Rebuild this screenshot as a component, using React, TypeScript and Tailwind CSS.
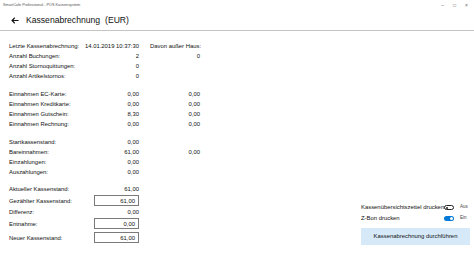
import React from "react";

type RowProps = { label: string; value?: string; extra?: string; extraLeft?: boolean };

function Row({ label, value, extra, extraLeft }: RowProps) {
  return (
    <div className="flex h-[10px] items-center whitespace-nowrap leading-[10px]">
      <span className="w-[85px] shrink-0">{label}</span>
      <span className="flex w-[45px] shrink-0 justify-end">{value}</span>
      <span className="w-[11px] shrink-0" />
      <span className={`flex w-[50px] shrink-0 ${extraLeft ? "justify-start" : "justify-end"}`}>{extra}</span>
    </div>
  );
}

function BoxRow({ label, value }: { label: string; value: string }) {
  return (
    <div className="flex h-[13px] items-center whitespace-nowrap leading-[10px]">
      <span className="w-[85px] shrink-0">{label}</span>
      <div className="flex h-[11px] w-[45px] shrink-0 items-center justify-end border border-[#7a7a7a] bg-white pr-[3px]">{value}</div>
    </div>
  );
}

function Toggle({ on, label, state }: { on: boolean; label: string; state: string }) {
  return (
    <div className="flex h-[11px] items-center whitespace-nowrap">
      <span className="flex-1">{label}</span>
      {on ? (
        <span className="flex h-[5px] w-[10px] items-center justify-end rounded-full bg-[#0078d7] pr-[1px]">
          <span className="h-[3px] w-[3px] rounded-full bg-white" />
        </span>
      ) : (
        <span className="flex h-[5px] w-[10px] items-center rounded-full border border-[#222] pl-[1px]">
          <span className="h-[2px] w-[2px] rounded-full bg-[#222]" />
        </span>
      )}
      <span className="ml-[6px] w-[10px] text-[4.5px] text-[#444]">{state}</span>
    </div>
  );
}

export default function App() {
  return (
    <div className="flex h-[253px] w-[474px] flex-col overflow-hidden bg-white font-['Liberation_Sans',Arial,sans-serif] text-[#111]">
      <div className="flex h-[11px] items-center justify-between pl-[3px] pr-[6px]">
        <span className="text-[3.8px] text-[#555]">SmartCafe Professional - POS Kassensystem</span>
        <div className="flex items-center gap-[9px] text-[5px] text-[#666]">
          <span>–</span>
          <span>□</span>
          <span>×</span>
        </div>
      </div>
      <div className="flex h-[20px] items-center border-b border-[#c4c4c4] pl-[11px]">
        <svg width="8" height="7" viewBox="0 0 16 14" className="shrink-0">
          <path d="M15 7H2M7.5 1.5L2 7l5.5 5.5" fill="none" stroke="#111" strokeWidth="2.2" />
        </svg>
        <span className="ml-[7px] text-[8.6px]">Kassenabrechnung</span>
        <span className="ml-[5px] text-[8.6px]">(EUR)</span>
      </div>
      <div className="flex flex-1 text-[5.9px]">
        <div className="flex flex-col pl-[9px] pt-[10px]">
          <Row label="Letzte Kassenabrechnung:" value="14.01.2019 10:37:30" extra="Davon außer Haus:" extraLeft />
          <Row label="Anzahl Buchungen:" value="2" extra="0" />
          <Row label="Anzahl Stornoquittungen:" value="0" />
          <Row label="Anzahl Artikelstornos:" value="0" />
          <div className="h-[8px]" />
          <Row label="Einnahmen EC-Karte:" value="0,00" extra="0,00" />
          <Row label="Einnahmen Kreditkarte:" value="0,00" extra="0,00" />
          <Row label="Einnahmen Gutschein:" value="8,30" extra="0,00" />
          <Row label="Einnahmen Rechnung:" value="0,00" extra="0,00" />
          <div className="h-[8px]" />
          <Row label="Startkassenstand:" value="0,00" />
          <Row label="Bareinnahmen:" value="61,00" extra="0,00" />
          <Row label="Einzahlungen:" value="0,00" />
          <Row label="Auszahlungen:" value="0,00" />
          <div className="h-[7px]" />
          <Row label="Aktueller Kassenstand:" value="61,00" />
          <BoxRow label="Gezählter Kassenstand:" value="61,00" />
          <Row label="Differenz:" value="0,00" />
          <BoxRow label="Entnahme:" value="0,00" />
          <div className="h-[1px]" />
          <BoxRow label="Neuer Kassenstand:" value="61,00" />
        </div>
        <div className="ml-auto mr-[4px] flex w-[109px] flex-col justify-end pb-[8px]">
          <Toggle on={false} label="Kassenübersichtszettel drucken" state="Aus" />
          <Toggle on label="Z-Bon drucken" state="Ein" />
          <button type="button" className="mt-[4px] h-[17px] w-full bg-[#d6e9f9] text-[5.9px] text-[#111]">
            Kassenabrechnung durchführen
          </button>
        </div>
      </div>
    </div>
  );
}
